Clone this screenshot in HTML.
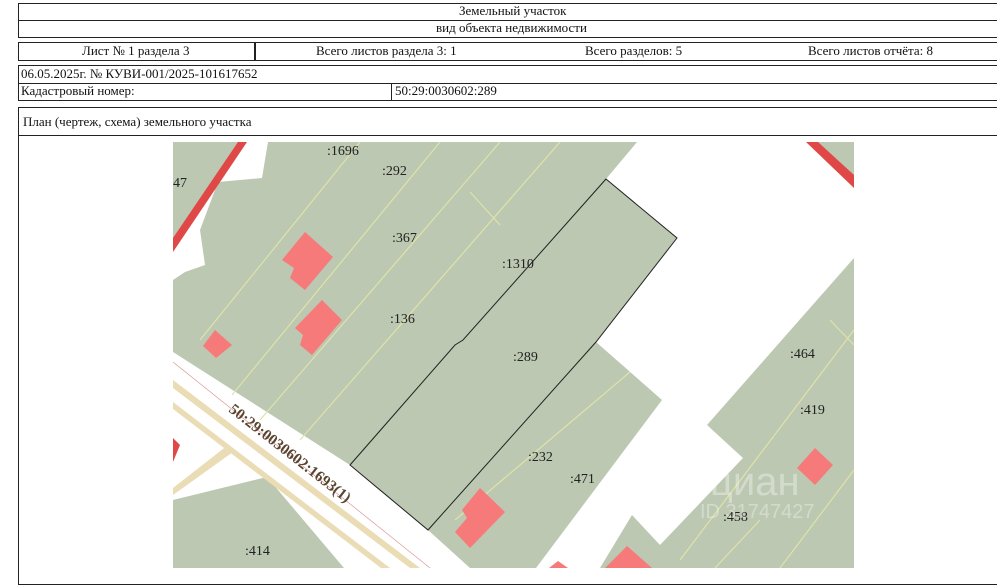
<!DOCTYPE html>
<html><head><meta charset="utf-8"><style>
body{margin:0;width:997px;height:568px;background:#fff;position:relative;overflow:hidden;font-family:"Liberation Serif",serif;font-size:13px;color:#111}
.b{position:absolute;border:1.5px solid #222;box-sizing:border-box}
.t{position:absolute;white-space:nowrap}
</style></head><body>
<div class="b" style="left:18px;top:3px;width:990px;height:18px"></div>
<div class="b" style="left:18px;top:20px;width:990px;height:18px"></div>
<div class="t" style="left:459px;top:3px">Земельный участок</div>
<div class="t" style="left:436px;top:20px">вид объекта недвижимости</div>
<div class="b" style="left:18px;top:42px;width:990px;height:19px"></div>
<div class="b" style="left:254px;top:42px;width:2px;height:19px;border-width:0 0 0 2px"></div>
<div class="t" style="left:82px;top:43px">Лист № 1 раздела 3</div>
<div class="t" style="left:316px;top:43px">Всего листов раздела 3: 1</div>
<div class="t" style="left:585px;top:43px">Всего разделов: 5</div>
<div class="t" style="left:808px;top:43px">Всего листов отчёта: 8</div>
<div class="b" style="left:18px;top:65px;width:990px;height:19px"></div>
<div class="b" style="left:18px;top:83px;width:990px;height:18px"></div>
<div class="b" style="left:391px;top:83px;width:2px;height:18px;border-width:0 0 0 1.5px"></div>
<div class="t" style="left:21px;top:66px">06.05.2025г. № КУВИ-001/2025-101617652</div>
<div class="t" style="left:21px;top:83px">Кадастровый номер:</div>
<div class="t" style="left:395px;top:83px">50:29:0030602:289</div>
<div class="b" style="left:18px;top:107px;width:990px;height:29px"></div>
<div class="b" style="left:18px;top:135px;width:990px;height:450px"></div>
<div class="t" style="left:23px;top:114px">План (чертеж, схема) земельного участка</div>
<svg style="position:absolute;left:0;top:0" width="997" height="568">
<defs><clipPath id="c"><rect x="173" y="142" width="681" height="426"/></clipPath></defs>
<g clip-path="url(#c)">
<rect x="173" y="142" width="681" height="426" fill="#bcc8b1"/>
<polygon fill="#fff" points="637,142 808,142 854,185 854,258 707,425 743,458 660,545 632,515 600,568 536,568 662,400 596,342 677,238 606,179"/>
<polygon fill="#fff" points="173,352 350,465 428,530 470,568 344,568 267,477 173,500"/>
<polygon fill="#fff" points="173,248 244,142 268,142 262,178 218,182 200,230 205,265 185,272 173,280"/>
<polygon fill="#eadcb5" points="173,380 420,568 410,568 173,388"/>
<polygon fill="#eadcb5" points="173,402 390,568 381,568 173,409"/>
<polygon fill="#eadcb5" points="173,488 228,445 233,452 173,495"/>
<line x1="173" y1="362" x2="430" y2="568" stroke="#d99" stroke-width="0.7"/>
<polygon fill="#e04848" points="173,238 238,142 247,142 173,252"/>
<polygon fill="#e04848" points="806,142 818,142 854,175 854,188"/>
<polygon fill="#e04848" points="173,438 180,445 173,462"/>
<g stroke="#dfe3a8" stroke-width="1.2" fill="none">
<line x1="200" y1="340" x2="360" y2="142"/><line x1="232" y1="395" x2="440" y2="142"/>
<line x1="260" y1="420" x2="500" y2="142"/><line x1="300" y1="440" x2="560" y2="142"/>
<line x1="470" y1="192" x2="500" y2="225"/><line x1="455" y1="520" x2="630" y2="372"/>
<line x1="680" y1="560" x2="854" y2="330"/><line x1="780" y1="568" x2="854" y2="470"/>
<line x1="715" y1="568" x2="760" y2="520"/><line x1="830" y1="320" x2="854" y2="345"/>
</g>
<polygon fill="none" stroke="#222" stroke-width="1" points="606,179 677,238 596,342 428,530 350,465 455,345 463,340"/>
<g fill="#f77a7a">
<polygon points="305,232 333,257 305,290 290,278 294,268 282,260"/>
<polygon points="322,300 342,320 312,355 300,345 303,335 295,328"/>
<polygon points="215,330 232,345 216,358 203,346"/>
<polygon points="480,488 505,512 470,548 455,532 467,518 462,510"/>
<polygon points="815,448 833,465 815,485 797,468"/>
<polygon points="627,546 652,568 605,568"/>
<polygon points="558,561 568,568 549,568"/>
</g>
<g font-family="Liberation Serif,serif" font-size="14" fill="#222">
<text x="327" y="155">:1696</text><text x="382" y="175">:292</text><text x="173" y="187">47</text>
<text x="392" y="242">:367</text><text x="502" y="268">:1310</text><text x="390" y="323">:136</text>
<text x="513" y="361">:289</text><text x="790" y="358">:464</text><text x="800" y="414">:419</text>
<text x="528" y="461">:232</text><text x="570" y="483">:471</text><text x="723" y="521">:458</text>
<text x="245" y="555">:414</text>
<text x="0" y="0" font-size="15.5" font-weight="bold" fill="#5a4630" transform="translate(228,411) rotate(38)">50:29:0030602:1693(1)</text>
</g>
<text x="710" y="495" font-family="Liberation Sans,sans-serif" font-size="40" fill="#fff" opacity="0.35">циан</text>
<text x="700" y="518" font-family="Liberation Sans,sans-serif" font-size="20" fill="#fff" opacity="0.35">ID 31747427</text>
</g>
</svg>
</body></html>
